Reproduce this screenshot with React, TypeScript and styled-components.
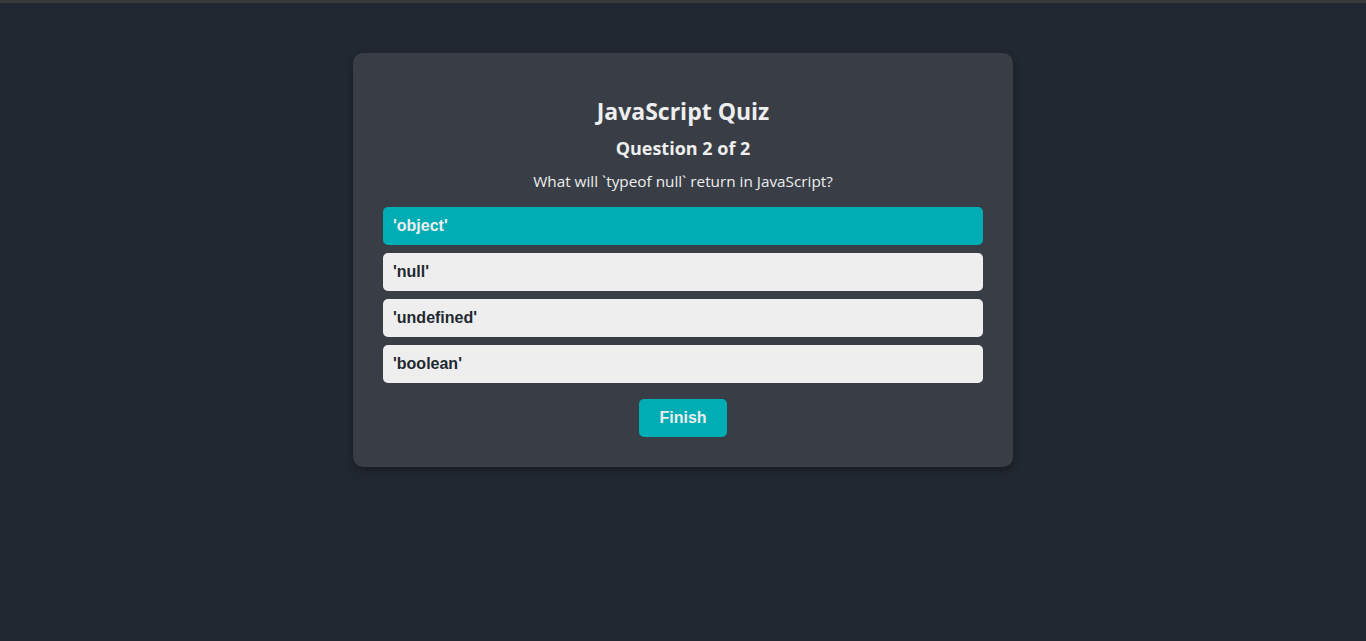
import React, { useState } from "react";
import styled, { createGlobalStyle } from "styled-components";

const GlobalStyle = createGlobalStyle`
  html, body {
    margin: 0;
    padding: 0;
    background: #222831;
  }
  body {
    border-top: 3px solid #393939;
    font-family: "Open Sans", "Noto Sans", sans-serif;
    color: #eeeeee;
  }
`;

const Page = styled.div`
  min-height: 638px;
  display: flex;
  justify-content: center;
  align-items: flex-start;
  padding-top: 50px;
  box-sizing: border-box;
`;

const Card = styled.div`
  width: 660px;
  box-sizing: border-box;
  padding: 30px;
  background: #393e46;
  border-radius: 10px;
  box-shadow: 0 4px 10px rgba(0, 0, 0, 0.3);
  display: flex;
  flex-direction: column;
  align-items: center;
`;

const Title = styled.h1`
  font-size: 23px;
  font-weight: 700;
  margin: 12px 0 9px;
  line-height: 32px;
`;

const QuestionCount = styled.h2`
  font-size: 18px;
  font-weight: 700;
  margin: 0 0 11px;
  line-height: 24px;
`;

const QuestionText = styled.p`
  font-size: 15.3px;
  margin: 0 0 16px;
  line-height: 20px;
`;

const Options = styled.div`
  width: 100%;
  display: flex;
  flex-direction: column;
  gap: 8px;
`;

const Option = styled.button<{ $selected: boolean }>`
  width: 100%;
  height: 38px;
  border: none;
  border-radius: 5px;
  padding: 0 10px;
  text-align: left;
  font-family: "Liberation Sans", Arial, sans-serif;
  font-size: 16px;
  font-weight: 700;
  cursor: pointer;
  background: ${(p) => (p.$selected ? "#00adb5" : "#eeeeee")};
  color: ${(p) => (p.$selected ? "#eeeeee" : "#222831")};
`;

const FinishButton = styled.button`
  margin-top: 16px;
  width: 88px;
  height: 38px;
  border: none;
  border-radius: 5px;
  background: #00adb5;
  color: #eeeeee;
  font-family: "Liberation Sans", Arial, sans-serif;
  font-size: 16px;
  font-weight: 700;
  cursor: pointer;
`;

const answers = ["'object'", "'null'", "'undefined'", "'boolean'"];

const App = () => {
  const [selected, setSelected] = useState(0);

  return (
    <>
      <GlobalStyle />
      <Page>
        <Card>
          <Title>JavaScript Quiz</Title>
          <QuestionCount>Question 2 of 2</QuestionCount>
          <QuestionText>What will `typeof null` return in JavaScript?</QuestionText>
          <Options>
            {answers.map((a, i) => (
              <Option key={a} $selected={i === selected} onClick={() => setSelected(i)}>
                {a}
              </Option>
            ))}
          </Options>
          <FinishButton>Finish</FinishButton>
        </Card>
      </Page>
    </>
  );
};

export default App;
